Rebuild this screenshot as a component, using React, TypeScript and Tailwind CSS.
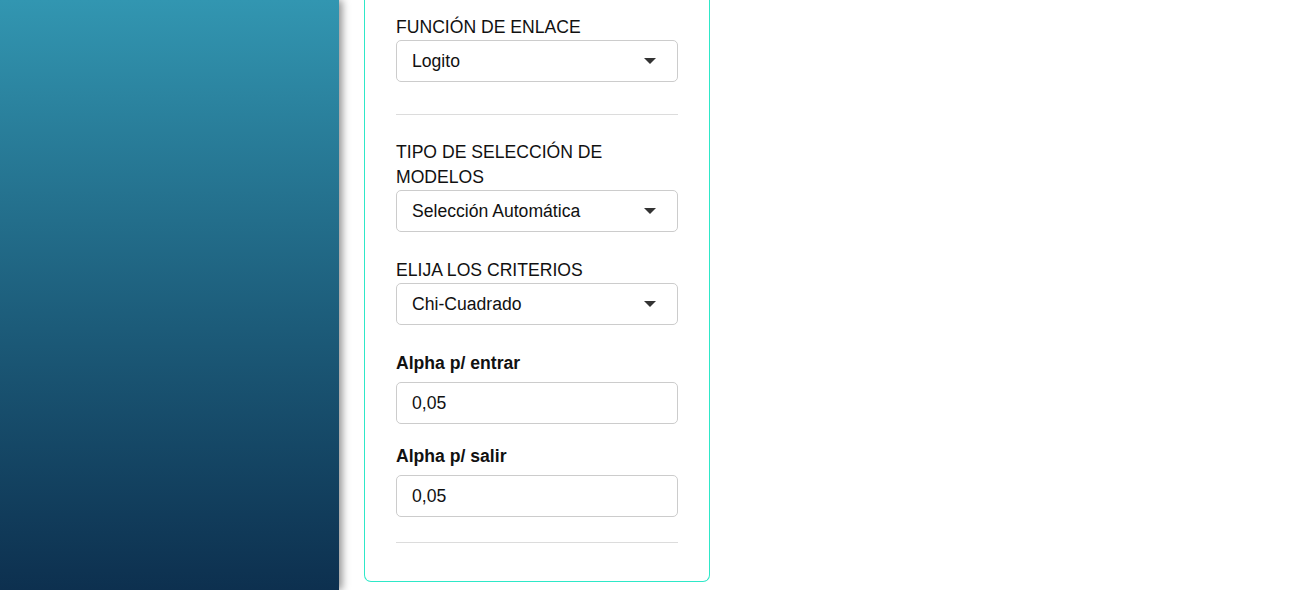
import React from "react";

function Caret() {
  return (
    <svg width="12" height="6" viewBox="0 0 12 6" className="shrink-0">
      <polygon points="0,0 12,0 6,6" fill="#333333" />
    </svg>
  );
}

function SelectBox({ value }: { value: string }) {
  return (
    <div className="flex h-[42px] items-center justify-between rounded-[5px] border border-[#cccccc] bg-white pl-[15px] pr-[21px] text-[17.6px] text-[#111]">
      <span>{value}</span>
      <Caret />
    </div>
  );
}

function InputBox({ value }: { value: string }) {
  return (
    <div className="flex h-[42px] items-center rounded-[5px] border border-[#cccccc] bg-white pl-[15px] text-[17.6px] text-[#111]">
      {value}
    </div>
  );
}

export default function App() {
  return (
    <div
      className="flex h-[590px] w-[1290px] overflow-hidden bg-white"
      style={{ fontFamily: '"Liberation Sans", Arial, sans-serif' }}
    >
      <div className="relative z-10 h-full w-[339px] shrink-0 bg-gradient-to-b from-[#3296b1] to-[#0d304f] shadow-[3px_0_8px_rgba(0,0,0,0.45)]" />
      <div className="pl-[25px]">
        <div className="w-[346px] rounded-b-[7px] border-x border-b border-[#2ee8c8] px-[31px] pt-[15px] pb-[38px]">
          <div className="text-[17.6px] leading-[25px] text-[#111]">
            <div>FUNCIÓN DE ENLACE</div>
            <SelectBox value="Logito" />
          </div>
          <div className="mt-[32px] mb-[25px] h-px bg-[#dcdcdc]" />
          <div className="text-[17.6px] leading-[25px] text-[#111]">
            <div>TIPO DE SELECCIÓN DE MODELOS</div>
            <SelectBox value="Selección Automática" />
          </div>
          <div className="mt-[26px] text-[17.6px] leading-[25px] text-[#111]">
            <div>ELIJA LOS CRITERIOS</div>
            <SelectBox value="Chi-Cuadrado" />
          </div>
          <div className="mt-[26px] text-[17.6px] leading-[25px] text-[#111]">
            <div className="mb-[6px] font-bold">Alpha p/ entrar</div>
            <InputBox value="0,05" />
          </div>
          <div className="mt-[20px] text-[17.6px] leading-[25px] text-[#111]">
            <div className="mb-[6px] font-bold">Alpha p/ salir</div>
            <InputBox value="0,05" />
          </div>
          <div className="mt-[25px] h-px bg-[#dcdcdc]" />
        </div>
      </div>
    </div>
  );
}
